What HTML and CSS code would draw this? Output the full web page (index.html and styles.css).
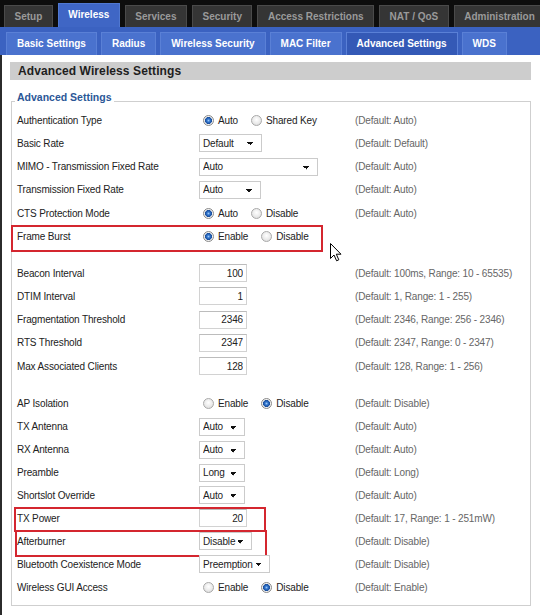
FILE: index.html
```html
<!DOCTYPE html>
<html>
<head>
<meta charset="utf-8">
<title>Advanced Wireless Settings</title>
<link rel="stylesheet" href="styles.css">
</head>
<body>
<div class="topbar">
  <div class="tab">Setup</div>
  <div class="tab active">Wireless</div>
  <div class="tab">Services</div>
  <div class="tab">Security</div>
  <div class="tab">Access Restrictions</div>
  <div class="tab">NAT / QoS</div>
  <div class="tab">Administration</div>
</div>
<div class="subbar">
  <div class="subtab">Basic Settings</div>
  <div class="subtab">Radius</div>
  <div class="subtab">Wireless Security</div>
  <div class="subtab">MAC Filter</div>
  <div class="subtab active">Advanced Settings</div>
  <div class="subtab">WDS</div>
</div>
<div class="content">
  <div class="hdr">Advanced Wireless Settings</div>
  <fieldset>
    <legend>Advanced Settings</legend>
    <div class="group g1">
      <div class="row"><span class="lbl">Authentication Type</span><span class="ctl"><input type="radio" class="radio" name="auth" checked><span class="opt">Auto</span><input type="radio" class="radio" name="auth"><span class="opt">Shared Key</span></span><span class="def">(Default: Auto)</span></div>
      <div class="row"><span class="lbl">Basic Rate</span><span class="ctl"><select class="sel w63"><option>Default</option></select></span><span class="def">(Default: Default)</span></div>
      <div class="row"><span class="lbl">MIMO - Transmission Fixed Rate</span><span class="ctl"><select class="sel w119"><option>Auto</option></select></span><span class="def">(Default: Auto)</span></div>
      <div class="row"><span class="lbl">Transmission Fixed Rate</span><span class="ctl"><select class="sel w62"><option>Auto</option></select></span><span class="def">(Default: Auto)</span></div>
      <div class="row"><span class="lbl">CTS Protection Mode</span><span class="ctl"><input type="radio" class="radio" name="cts" checked><span class="opt">Auto</span><input type="radio" class="radio" name="cts"><span class="opt">Disable</span></span><span class="def">(Default: Auto)</span></div>
      <div class="row mark fb"><span class="lbl">Frame Burst</span><span class="ctl"><input type="radio" class="radio" name="fb" checked><span class="opt">Enable</span><input type="radio" class="radio" name="fb"><span class="opt">Disable</span></span></div>
    </div>
    <div class="group g2">
      <div class="row"><span class="lbl">Beacon Interval</span><span class="ctl"><input class="txt" type="text" value="100"></span><span class="def">(Default: 100ms, Range: 10 - 65535)</span></div>
      <div class="row"><span class="lbl">DTIM Interval</span><span class="ctl"><input class="txt" type="text" value="1"></span><span class="def">(Default: 1, Range: 1 - 255)</span></div>
      <div class="row"><span class="lbl">Fragmentation Threshold</span><span class="ctl"><input class="txt" type="text" value="2346"></span><span class="def">(Default: 2346, Range: 256 - 2346)</span></div>
      <div class="row"><span class="lbl">RTS Threshold</span><span class="ctl"><input class="txt" type="text" value="2347"></span><span class="def">(Default: 2347, Range: 0 - 2347)</span></div>
      <div class="row"><span class="lbl">Max Associated Clients</span><span class="ctl"><input class="txt" type="text" value="128"></span><span class="def">(Default: 128, Range: 1 - 256)</span></div>
    </div>
    <div class="group g3">
      <div class="row"><span class="lbl">AP Isolation</span><span class="ctl"><input type="radio" class="radio" name="ap"><span class="opt">Enable</span><input type="radio" class="radio" name="ap" checked><span class="opt">Disable</span></span><span class="def">(Default: Disable)</span></div>
      <div class="row"><span class="lbl">TX Antenna</span><span class="ctl"><select class="sel w46"><option>Auto</option></select></span><span class="def">(Default: Auto)</span></div>
      <div class="row"><span class="lbl">RX Antenna</span><span class="ctl"><select class="sel w46"><option>Auto</option></select></span><span class="def">(Default: Auto)</span></div>
      <div class="row"><span class="lbl">Preamble</span><span class="ctl"><select class="sel w46"><option>Long</option></select></span><span class="def">(Default: Long)</span></div>
      <div class="row"><span class="lbl">Shortslot Override</span><span class="ctl"><select class="sel w46"><option>Auto</option></select></span><span class="def">(Default: Auto)</span></div>
      <div class="row mark txp"><span class="lbl">TX Power</span><span class="ctl"><input class="txt" type="text" value="20"></span><span class="def">(Default: 17, Range: 1 - 251mW)</span></div>
      <div class="row mark ab"><span class="lbl">Afterburner</span><span class="ctl"><select class="sel w53"><option>Disable</option></select></span><span class="def">(Default: Disable)</span></div>
      <div class="row"><span class="lbl">Bluetooth Coexistence Mode</span><span class="ctl"><select class="sel w71"><option>Preemption</option></select></span><span class="def">(Default: Disable)</span></div>
      <div class="row"><span class="lbl">Wireless GUI Access</span><span class="ctl"><input type="radio" class="radio" name="gui"><span class="opt">Enable</span><input type="radio" class="radio" name="gui" checked><span class="opt">Disable</span></span><span class="def">(Default: Enable)</span></div>
    </div>
  </fieldset>
</div>
<svg class="cursor" width="13" height="19" viewBox="0 0 13 19"><path d="M0.5 0.5 L0.5 15.5 L4 12 L6.6 17.8 L8.8 16.8 L6.3 11.2 L11 11.2 Z" fill="#fff" stroke="#000" stroke-width="1" stroke-linejoin="round"/></svg>
</body>
</html>
```

FILE: styles.css
```css
* { box-sizing: border-box; }
html, body { margin: 0; padding: 0; background: #fff; }
body {
  font-family: "Liberation Sans", Arial, sans-serif;
  font-size: 10px;
  color: #222;
  width: 540px;
  height: 615px;
  overflow: hidden;
  position: relative;
}
.topbar {
  display: flex;
  align-items: flex-end;
  gap: 5px;
  height: 27px;
  padding-left: 4px;
  background: #0d0d0d;
  white-space: nowrap;
  overflow: hidden;
}
.tab {
  flex: none;
  height: 22px;
  line-height: 22px;
  padding: 0 9.5px;
  background: #353535;
  border: 1px solid #4a4a4a;
  border-bottom: 0;
  color: #9a9a9a;
  font-weight: bold;
  font-size: 10px;
}
.tab.active {
  height: 24px;
  line-height: 22px;
  background: #3f66c5;
  border-color: #5078d0;
  color: #fff;
}
.subbar {
  display: flex;
  align-items: flex-end;
  gap: 4px;
  height: 28px;
  padding-left: 6px;
  background: #3b62c1;
  white-space: nowrap;
}
.subtab {
  flex: none;
  height: 23px;
  line-height: 22px;
  padding: 0 10px;
  background: #4a72ce;
  border: 1px solid #5a80d6;
  border-bottom: 0;
  color: #fff;
  font-weight: bold;
}
.subtab.active { background: #3459b6; }
.content {
  border-left: 2px solid #2b2b2b;
  padding: 7px 9px 0 8px;
  height: 560px;
}
.hdr {
  height: 18px;
  line-height: 18px;
  background: #cdcdcd;
  padding-left: 8px;
  font-weight: bold;
  font-size: 12px;
  letter-spacing: 0.1px;
  color: #1e1e1e;
}
fieldset {
  margin: 11px 0 0 1px;
  padding: 0 5px 7px;
  border: 1px solid #cfcfcf;
  min-width: 0;
}
legend {
  padding: 0 2px 8px;
  margin-left: -2px;
  line-height: 12px;
  font-size: 10.5px;
  font-weight: bold;
  color: #2b5797;
}
.g1 { margin-top: -2.5px; }
.g2 { margin-top: 13.4px; }
.g3 { margin-top: 14.8px; }
.row {
  display: flex;
  align-items: center;
  height: 23.25px;
  position: relative;
  white-space: nowrap;
  letter-spacing: -0.15px;
}
.g3 .row { height: 22.9px; }
.lbl { width: 182px; flex: none; }
.ctl { width: 156px; flex: none; display: flex; align-items: center; }
.def { color: #666; }
.opt { margin-right: 9px; }
.radio {
  -webkit-appearance: none;
  appearance: none;
  margin: 0 4px;
  width: 11px;
  height: 11px;
  border-radius: 50%;
  border: 1px solid #a9a9a9;
  background: radial-gradient(circle at 50% 40%, #fff 0, #e8e8e8 60%, #d2d2d2 100%);
  flex: none;
}
.radio:checked {
  border-color: #8a8a8a;
  background: radial-gradient(circle, #9cc8f6 0, #2f73cc 1.6px, #1b4f9c 3.2px, #f4f4f4 3.8px, #dcdcdc 100%);
}
.sel {
  -webkit-appearance: none;
  appearance: none;
  height: 18px;
  border: 1px solid #cbcbcb;
  border-radius: 0;
  background-color: #fff;
  font: inherit;
  letter-spacing: -0.15px;
  color: #222;
  padding: 0 0 0 3px;
  margin: 0;
  background-image: linear-gradient(45deg, transparent 50%, #111 50%), linear-gradient(135deg, #111 50%, transparent 50%);
  background-position: calc(100% - 11px) 7px, calc(100% - 7.5px) 7px;
  background-size: 3.5px 3.5px;
  background-repeat: no-repeat;
}
.w46 { width: 46px; }
.w53 { width: 53px; }
.w62 { width: 62px; }
.w63 { width: 63px; }
.w71 { width: 71px; }
.w119 { width: 119px; }
.txt {
  width: 48px;
  height: 18px;
  border: 1px solid #d2d2d2;
  border-top-color: #bcbcbc;
  font: inherit;
  letter-spacing: -0.15px;
  color: #222;
  text-align: right;
  padding: 0 3px 0 0;
  margin: 0;
  background: #fff;
}
.mark::after {
  content: "";
  position: absolute;
  top: 0;
  border: 2px solid #d4262f;
  pointer-events: none;
}
.fb::after { left: -6px; width: 308px; height: 23px; }
.txp::after { left: -3px; width: 248px; height: 21px; }
.ab::after { left: -2px; width: 248px; height: 23px; }
.cursor {
  position: absolute;
  left: 330px;
  top: 243px;
}
```
